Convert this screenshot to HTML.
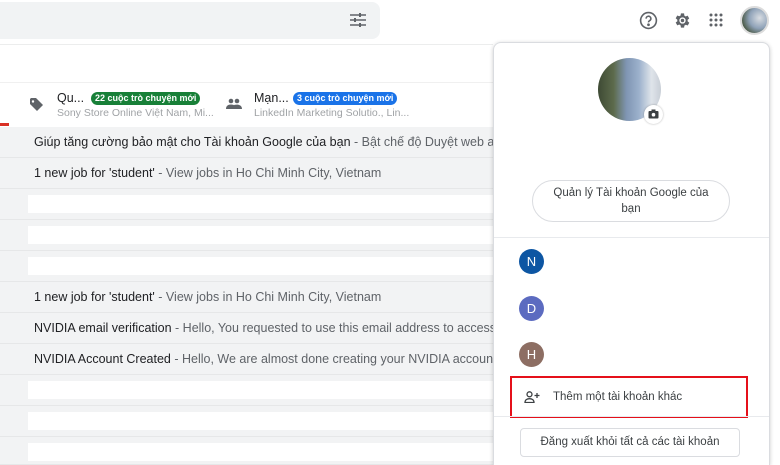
<!DOCTYPE html>
<html style="width:780px;height:465px;overflow:hidden"><head><meta charset="utf-8"><style>
*{margin:0;padding:0;box-sizing:border-box}
body{width:780px;height:465px;overflow:hidden;background:#fff;font-family:"Liberation Sans",Arial,sans-serif;position:relative;color:#202124}
.abs{position:absolute}
.row{position:absolute;left:0;width:493px;height:31px;background:#f2f3f4;border-bottom:1px solid #e6e7e8;font-size:12.5px;line-height:30px;padding-left:34px;white-space:nowrap;overflow:hidden}
.row .g{color:#5f6368}
.row.e::after{content:"";position:absolute;left:28px;right:0;top:6px;height:18px;background:#fff}
.av{position:absolute;left:519px;width:25px;height:25px;border-radius:50%;color:#fff;font-size:13px;text-align:center;line-height:25px}
.badge{position:absolute;top:92px;color:#fff;font-size:9px;font-weight:bold;padding:0 4px;border-radius:7px;line-height:13px;white-space:nowrap}
</style></head><body>
<div class="abs" style="left:0;top:2px;width:380px;height:37px;background:#f1f3f4;border-radius:0 8px 8px 0"></div>
<svg class="abs" style="left:349px;top:12px" width="18" height="16" viewBox="0 0 18 16" fill="none" stroke="#5f6368" stroke-width="1.6"><path d="M1 3h16M1 8h16M1 13h16"/><path d="M11 1v4M6 6v4M11 11v4" stroke-width="2"/></svg>
<div class="abs" style="left:0;top:44px;width:493px;height:1px;background:#eceded"></div>
<div class="abs" style="left:0;top:82px;width:493px;height:1px;background:#f0f0f0"></div>
<svg class="abs" style="left:29px;top:97px" width="15" height="15" viewBox="0 0 15 15"><path d="M1 2v5l7 7 6-6-7-7H2z" fill="#5f6368"/><circle cx="4" cy="4.5" r="1.2" fill="#fff"/></svg>
<div class="abs" style="left:57px;top:91px;font-size:12.5px">Qu...</div>
<div class="badge" style="left:91px;background:#188038">22 cuộc trò chuyện mới</div>
<div class="abs" style="left:57px;top:107px;font-size:10.5px;color:#a0a3a6">Sony Store Online Việt Nam, Mi...</div>
<svg class="abs" style="left:226px;top:98px" width="16" height="12" viewBox="0 0 16 12" fill="#5f6368"><circle cx="5" cy="3" r="2.3"/><circle cx="11" cy="3" r="2.3"/><path d="M0 11c0-3 2-4.5 5-4.5s5 1.5 5 4.5zM9 11c0-2 0-3-1-4 4-1 8 0 8 4z"/></svg>
<div class="abs" style="left:254px;top:91px;font-size:12.5px">Mạn...</div>
<div class="badge" style="left:293px;background:#1a73e8">3 cuộc trò chuyện mới</div>
<div class="abs" style="left:254px;top:107px;font-size:10.5px;color:#a0a3a6">LinkedIn Marketing Solutio., Lin...</div>
<div class="abs" style="left:0;top:123px;width:9px;height:3px;background:#d93025"></div>
<div class="row" style="top:127px">Giúp tăng cường bảo mật cho Tài khoản Google của bạn <span class="g">- Bật chế độ Duyệt web an toàn có tăng cường</span></div>
<div class="row" style="top:158px">1 new job for 'student' <span class="g">- View jobs in Ho Chi Minh City, Vietnam</span></div>
<div class="row e" style="top:189px"></div>
<div class="row e" style="top:220px"></div>
<div class="row e" style="top:251px"></div>
<div class="row" style="top:282px">1 new job for 'student' <span class="g">- View jobs in Ho Chi Minh City, Vietnam</span></div>
<div class="row" style="top:313px">NVIDIA email verification <span class="g">- Hello, You requested to use this email address to access your NVIDIA</span></div>
<div class="row" style="top:344px">NVIDIA Account Created <span class="g">- Hello, We are almost done creating your NVIDIA account. You can</span></div>
<div class="row e" style="top:375px"></div>
<div class="row e" style="top:406px"></div>
<div class="row e" style="top:437px;height:28px"></div>
<svg class="abs" style="left:639px;top:11px" width="19" height="19" viewBox="0 0 20 20" fill="none" stroke="#5f6368" stroke-width="1.7"><circle cx="10" cy="10" r="8.3"/><path d="M7.5 8a2.5 2.5 0 1 1 3.5 2.3c-.8.4-1 .9-1 1.7"/><circle cx="10" cy="14.5" r=".6" fill="#5f6368"/></svg>
<svg class="abs" style="left:673px;top:11px" width="19" height="19" viewBox="0 0 24 24"><path fill="#5f6368" d="M19.4 13a7.5 7.5 0 0 0 0-2l2.1-1.6-2-3.5-2.5 1a7 7 0 0 0-1.7-1L15 3h-4l-.4 2.7a7 7 0 0 0-1.7 1l-2.5-1-2 3.5L6.5 11a7.5 7.5 0 0 0 0 2l-2.1 1.6 2 3.5 2.5-1a7 7 0 0 0 1.7 1L11 21h4l.4-2.7a7 7 0 0 0 1.7-1l2.5 1 2-3.5zM13 16a4 4 0 1 1 0-8 4 4 0 0 1 0 8z" transform="translate(-1 0)"/><circle cx="12" cy="12" r="2.2" fill="#5f6368"/></svg>
<svg class="abs" style="left:709px;top:13px" width="14" height="14" viewBox="0 0 14 14" fill="#5f6368"><circle cx="2" cy="2" r="1.5"/><circle cx="7" cy="2" r="1.5"/><circle cx="12" cy="2" r="1.5"/><circle cx="2" cy="7" r="1.5"/><circle cx="7" cy="7" r="1.5"/><circle cx="12" cy="7" r="1.5"/><circle cx="2" cy="12" r="1.5"/><circle cx="7" cy="12" r="1.5"/><circle cx="12" cy="12" r="1.5"/></svg>
<div class="abs" style="left:740px;top:6px;width:29px;height:29px;border-radius:50%;background:radial-gradient(circle at 70% 40%,#d9dde2,#8fa2b8 45%,#46553f 80%);border:2px solid #dcdcdc"></div>
<div class="abs" style="left:493px;top:42px;width:277px;height:423px;background:#fff;border:1px solid #dadce0;border-bottom:none;border-radius:8px 8px 0 0;box-shadow:0 1px 4px rgba(0,0,0,.2)"></div>
<div class="abs" style="left:598px;top:58px;width:63px;height:63px;border-radius:50%;background:linear-gradient(90deg,#3e4a34 0%,#5d6b4c 25%,#7f95b3 45%,#9cb1cc 65%,#dfe4ea 85%,#c8ced6 100%)"></div>
<div class="abs" style="left:644px;top:105px;width:19px;height:19px;border-radius:50%;background:#fff;box-shadow:0 0 2px rgba(0,0,0,.3)"></div>
<svg class="abs" style="left:648px;top:109px" width="11" height="10" viewBox="0 0 11 10"><rect x="0.5" y="2" width="10" height="7.5" rx="1" fill="#3c4043"/><rect x="3.5" y="0.5" width="4" height="2" fill="#3c4043"/><circle cx="5.5" cy="5.7" r="1.8" fill="#fff"/></svg>
<div class="abs" style="left:532px;top:180px;width:198px;height:42px;border:1px solid #dadce0;border-radius:21px;font-size:11.5px;text-align:center;line-height:16px;padding-top:4px;color:#3c4043">Quản lý Tài khoản Google của<br>bạn</div>
<div class="abs" style="left:494px;top:237px;width:275px;height:1px;background:#e8eaed"></div>
<div class="av" style="top:249px;background:#0d56a3">N</div>
<div class="av" style="top:296px;background:#5c6bc0">D</div>
<div class="av" style="top:342px;background:#8d6e63">H</div>
<div class="abs" style="left:510px;top:376px;width:238px;height:42px;border:2px solid #e5101a"></div>
<svg class="abs" style="left:524px;top:391px" width="16" height="12" viewBox="0 0 16 12" fill="none" stroke="#3c4043" stroke-width="1.3"><circle cx="5.5" cy="3.3" r="2.5"/><path d="M1 11.5c0-2.5 2-3.8 4.5-3.8S10 9 10 11.5z"/><path d="M13 2v5M10.5 4.5h5"/></svg>
<div class="abs" style="left:553px;top:391px;font-size:11.5px;color:#3c4043">Thêm một tài khoản khác</div>
<div class="abs" style="left:494px;top:416px;width:275px;height:1px;background:#e8eaed"></div>
<div class="abs" style="left:520px;top:428px;width:220px;height:29px;border:1px solid #dadce0;border-radius:4px;font-size:11.5px;text-align:center;line-height:27px;color:#3c4043">Đăng xuất khỏi tất cả các tài khoản</div>
</body></html>
